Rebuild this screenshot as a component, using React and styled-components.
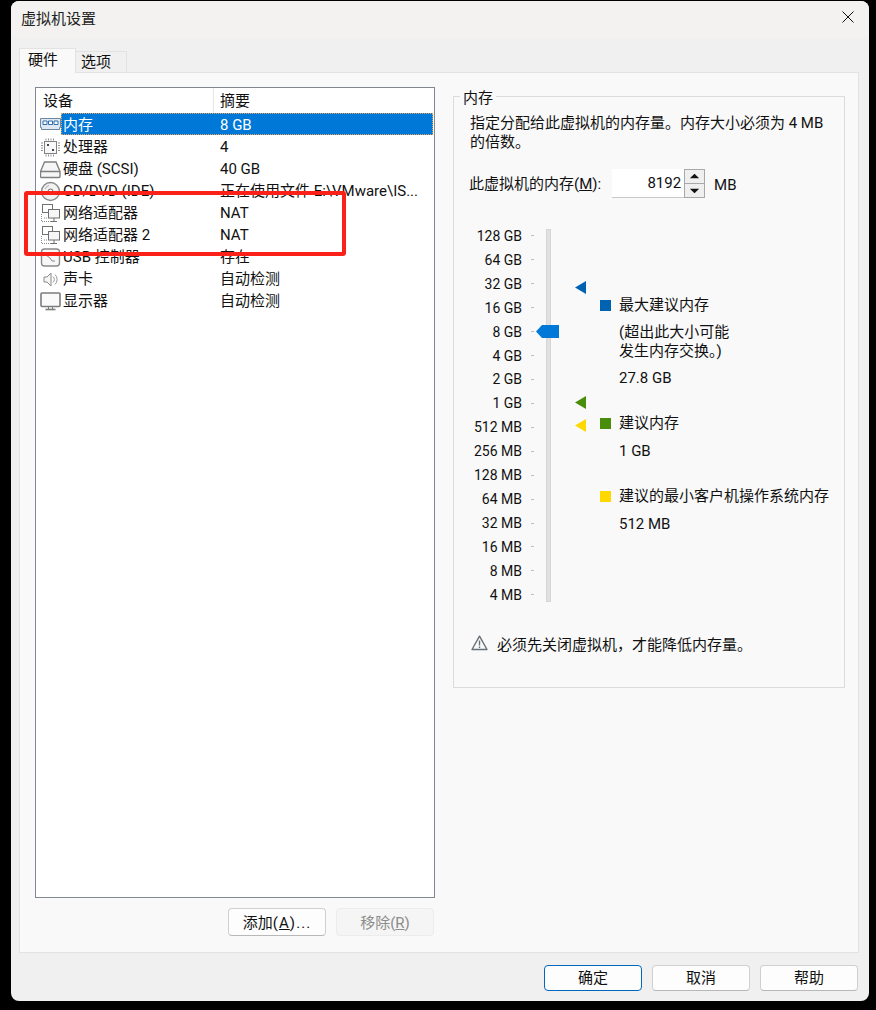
import React from 'react'
import styled, { createGlobalStyle } from 'styled-components'

const GlobalStyle = createGlobalStyle`
  html, body {
    margin: 0;
    padding: 0;
    height: 100%;
    background: #000;
  }
  body {
    font-family: "Roboto", "Noto Sans CJK SC", sans-serif;
    font-size: 15px;
    color: #111;
    overflow: hidden;
  }
`

const devices = [
  { icon: 'memory', name: '内存', summary: '8 GB', selected: true },
  { icon: 'cpu', name: '处理器', summary: '4' },
  { icon: 'disk', name: '硬盘 (SCSI)', summary: '40 GB' },
  { icon: 'cd', name: 'CD/DVD (IDE)', summary: '正在使用文件 E:\\VMware\\IS...' },
  { icon: 'net', name: '网络适配器', summary: 'NAT' },
  { icon: 'net', name: '网络适配器 2', summary: 'NAT' },
  { icon: 'usb', name: 'USB 控制器', summary: '存在' },
  { icon: 'sound', name: '声卡', summary: '自动检测' },
  { icon: 'monitor', name: '显示器', summary: '自动检测' },
]

const scale = ['128 GB', '64 GB', '32 GB', '16 GB', '8 GB', '4 GB', '2 GB', '1 GB', '512 MB', '256 MB', '128 MB', '64 MB', '32 MB', '16 MB', '8 MB', '4 MB']

const icons = {
  memory: (
    <>
      <path d="M0.5 3.5h20v9h-1v2h-18v-2h-1z" fill="#dfe8f2" stroke="#6d88a5" />
      <path d="M3 6h4v3.5H3zM8.5 6h4v3.5h-4zM14 6h4v3.5h-4z" fill="#fff" stroke="#2f6fae" />
    </>
  ),
  cpu: (
    <>
      <rect x="4.5" y="4.5" width="12" height="12" fill="#f8f8f8" stroke="#808080" />
      <path d="M6 1.5v2M8.5 1.5v2M11 1.5v2M13.5 1.5v2M6 17.5v2M8.5 17.5v2M11 17.5v2M13.5 17.5v2M1 6h2M1 8.5h2M1 11h2M1 13.5h2M18 6h2M18 8.5h2M18 11h2M18 13.5h2" stroke="#909090" />
      <path d="M7 7h2v2H7zM12 12h2v2h-2z" fill="#444" />
    </>
  ),
  disk: (
    <>
      <path d="M4.5 3h11.5l4 9.5v5a1 1 0 0 1-1 1H1.5a1 1 0 0 1-1-1v-5z" fill="#f6f6f6" stroke="#808080" strokeWidth="1.4" />
      <path d="M0.5 12.5h19.5" stroke="#808080" strokeWidth="1.4" />
    </>
  ),
  cd: (
    <>
      <circle cx="10.5" cy="10.5" r="9" fill="#f2f2f2" stroke="#8a8a8a" strokeWidth="1.4" />
      <circle cx="10.5" cy="10.5" r="2.5" fill="#fff" stroke="#666" />
      <path d="M5 8a6 6 0 0 1 4-3.5" fill="none" stroke="#aaa" />
    </>
  ),
  net: (
    <>
      <rect x="2.5" y="1.5" width="10" height="8" fill="#fff" stroke="#707070" />
      <path d="M1.5 11v7.5h11M4 15h4" fill="none" stroke="#8a8a8a" strokeDasharray="1 1" />
      <rect x="8.5" y="6.5" width="11" height="8.5" fill="#f6f6f6" stroke="#707070" />
      <path d="M14 15v3M11 18.5h6" stroke="#707070" />
    </>
  ),
  usb: (
    <>
      <rect x="1.5" y="2" width="18" height="17" rx="3" fill="#f7f7f7" stroke="#8a8a8a" strokeWidth="1.4" />
      <path d="M6 8l4 3 2 3h3" fill="none" stroke="#8a8a8a" />
    </>
  ),
  sound: (
    <>
      <path d="M4 8h3l4-4v13l-4-4H4z" fill="#f6f6f6" stroke="#8a8a8a" />
      <path d="M13 7.5a4 4 0 0 1 0 6M15 5.5a7 7 0 0 1 0 10" fill="none" stroke="#9a9a9a" />
    </>
  ),
  monitor: (
    <>
      <rect x="1" y="2" width="19" height="13.5" rx="1" fill="#fafafa" stroke="#7c7c7c" strokeWidth="1.6" />
      <path d="M8.5 15.5v2.5M12.5 15.5v2.5" stroke="#7c7c7c" />
      <path d="M5.5 18.5h10" stroke="#7c7c7c" strokeWidth="1.6" />
    </>
  ),
}

function App() {
  return (
    <Window>
      <GlobalStyle />
      <TitleBar>
        <span>虚拟机设置</span>
        <CloseIcon viewBox="0 0 12 12">
          <path d="M0.5 0.5l11 11M11.5 0.5l-11 11" />
        </CloseIcon>
      </TitleBar>

      <Tabs>
        <Tab $active>硬件</Tab>
        <Tab>选项</Tab>
      </Tabs>

      <Panel>
        <LeftColumn>
          <DeviceList>
            <ListHeader>
              <HeaderCell $width={178}>设备</HeaderCell>
              <HeaderCell>摘要</HeaderCell>
            </ListHeader>
            {devices.map((d, i) => (
              <Row key={i}>
                <RowIcon viewBox="0 0 21 21">{icons[d.icon]}</RowIcon>
                <RowBody $selected={d.selected}>
                  <RowName>{d.name}</RowName>
                  <span>{d.summary}</span>
                </RowBody>
              </Row>
            ))}
          </DeviceList>
          <ListActions>
            <ListButton $width={98} $height={28}>添加<Mnemonic>(<u>A</u>)...</Mnemonic></ListButton>
            <ListButton $width={98} $height={28} disabled>移除(<u>R</u>)</ListButton>
          </ListActions>
        </LeftColumn>

        <Group>
          <GroupTitle>内存</GroupTitle>
          <Description>
            指定分配给此虚拟机的内存量。内存大小必须为 4 MB<br />的倍数。
          </Description>

          <AmountRow>
            <AmountLabel>此虚拟机的内存(<u>M</u>):</AmountLabel>
            <Spinner>
              <SpinInput>8192</SpinInput>
              <SpinButtons>
                <SpinButton viewBox="0 0 20 14" $up><path d="M10 4l5 5H5z" /></SpinButton>
                <SpinButton viewBox="0 0 20 14"><path d="M10 10L5 5h10z" /></SpinButton>
              </SpinButtons>
            </Spinner>
            <AmountUnit>MB</AmountUnit>
          </AmountRow>

          <SliderArea>
            <ScaleLabels>
              {scale.map(s => (
                <ScaleRow key={s}>
                  <span>{s}</span>
                  <Tick />
                </ScaleRow>
              ))}
            </ScaleLabels>
            <Track>
              <Thumb />
            </Track>
            <Markers>
              <Marker $color="#0063b1" $top={57} />
              <Marker $color="#498e0b" $top={102} />
              <Marker $color="#ffd800" $top={10} />
            </Markers>
            <Legend>
              <LegendItem $color="#0063b1">
                <LegendLabel>最大建议内存</LegendLabel>
                <LegendNote>(超出此大小可能<br />发生内存交换。)</LegendNote>
                <LegendValue>27.8 GB</LegendValue>
              </LegendItem>
              <LegendItem $color="#498e0b" $gap={25}>
                <LegendLabel>建议内存</LegendLabel>
                <LegendValue>1 GB</LegendValue>
              </LegendItem>
              <LegendItem $color="#ffd800" $gap={25}>
                <LegendLabel>建议的最小客户机操作系统内存</LegendLabel>
                <LegendValue>512 MB</LegendValue>
              </LegendItem>
            </Legend>
          </SliderArea>

          <Warning>
            <svg width="17" height="16" viewBox="0 0 17 16">
              <path d="M8.5 1.2L16 14.5H1z" fill="none" stroke="#68707a" strokeWidth="1.4" strokeLinejoin="round" />
              <path d="M8.5 5.5v5M8.5 11.5v1.6" stroke="#68707a" strokeWidth="1.4" />
            </svg>
            <span>必须先关闭虚拟机，才能降低内存量。</span>
          </Warning>
        </Group>
      </Panel>

      <Footer>
        <Button $width={98} $height={26} $primary>确定</Button>
        <Button $width={98} $height={26}>取消</Button>
        <Button $width={98} $height={26}>帮助</Button>
      </Footer>

      <Highlight />
    </Window>
  )
}

const Window = styled.div`
  position: relative;
  width: 858px;
  height: 1000px;
  margin: 1px 0 0 11px;
  background: #f0f0f0;
  border-radius: 8px;
  overflow: hidden;
  display: flex;
  flex-direction: column;
`

const TitleBar = styled.div`
  box-sizing: border-box;
  height: 37px;
  flex: none;
  display: flex;
  align-items: center;
  justify-content: space-between;
  padding: 0 15px 5px 10px;
  background: #f3f2f0;
  color: #222;
`

const CloseIcon = styled.svg`
  width: 12px;
  height: 12px;
  fill: none;
  stroke: #111;
  stroke-width: 1;
`

const Tabs = styled.div`
  height: 25px;
  margin: 10px 0 -1px 8px;
  display: flex;
  align-items: flex-end;
  position: relative;
  z-index: 1;
`

const Tab = styled.div`
  box-sizing: border-box;
  width: ${p => (p.$active ? 57 : 51)}px;
  height: ${p => (p.$active ? 25 : 22)}px;
  display: flex;
  align-items: center;
  padding: 0 0 ${p => (p.$active ? 6 : 4)}px ${p => (p.$active ? 8 : 5)}px;
  background: ${p => (p.$active ? '#f9f9f9' : '#f0f0f0')};
  border: 1px solid #e2e2e2;
  border-bottom: ${p => (p.$active ? 'none' : '1px solid #e2e2e2')};
  border-left: ${p => (p.$active ? '1px solid #e2e2e2' : 'none')};
`

const Panel = styled.div`
  box-sizing: border-box;
  width: 840px;
  height: 881px;
  margin-left: 8px;
  padding: 14px 13px 0 15px;
  display: flex;
  gap: 18px;
  background: #f9f9f9;
  border: 1px solid #e2e2e2;
`

const LeftColumn = styled.div`
  width: 400px;
  flex: none;
  display: flex;
  flex-direction: column;
  gap: 10px;
`

const DeviceList = styled.div`
  box-sizing: border-box;
  height: 811px;
  background: #fff;
  border: 1px solid #828790;
`

const ListHeader = styled.div`
  height: 25px;
  display: flex;
  align-items: center;
`

const HeaderCell = styled.div`
  box-sizing: border-box;
  width: ${p => (p.$width ? p.$width + 'px' : 'auto')};
  height: 100%;
  display: flex;
  align-items: center;
  padding: 0 0 3px ${p => (p.$width ? 7 : 6)}px;
  border-right: ${p => (p.$width ? '1px solid #e5e5e5' : 'none')};
`

const Row = styled.div`
  height: 22px;
  display: flex;
  align-items: center;
`

const RowIcon = styled.svg`
  width: 21px;
  height: 21px;
  flex: none;
  margin: 2px 0 0 4px;
`

const RowBody = styled.div`
  box-sizing: border-box;
  flex: 1;
  height: 22px;
  margin-right: 1px;
  padding-left: 2px;
  display: flex;
  align-items: baseline;
  line-height: 24px;
  white-space: nowrap;
  color: ${p => (p.$selected ? '#fff' : '#111')};
  background: ${p => (p.$selected ? '#0078d7' : 'transparent')};
  outline: ${p => (p.$selected ? '1px dotted #e8a35c' : 'none')};
  outline-offset: -1px;
`

const RowName = styled.span`
  width: 157px;
  flex: none;
`

const ListActions = styled.div`
  display: flex;
  justify-content: flex-end;
  gap: 10px;
  padding-right: 1px;
`

const Button = styled.button`
  box-sizing: border-box;
  width: ${p => p.$width}px;
  height: ${p => p.$height}px;
  padding: 0 0 3px;
  font: inherit;
  color: ${p => (p.disabled ? '#8c8c8c' : '#111')};
  background: ${p => (p.disabled ? '#f5f5f5' : '#fdfdfd')};
  border: 1px solid ${p => (p.$primary ? '#0067c0' : p.disabled ? '#ececec' : '#d0d0d0')};
  border-bottom-color: ${p => (p.$primary ? '#0067c0' : p.disabled ? '#ececec' : '#b8b8b8')};
  border-radius: 4px;
`

const ListButton = styled(Button)`
  padding-bottom: 1px;
`

const Mnemonic = styled.span`
  letter-spacing: 1.1px;
`

const Group = styled.fieldset`
  box-sizing: border-box;
  width: 392px;
  height: 601px;
  margin: 0;
  padding: 0 0 0 16px;
  border: 1px solid #dcdcdc;
  min-width: 0;
`

const GroupTitle = styled.legend`
  margin-left: -10px;
  padding: 0 3px;
  height: 18px;
  line-height: 22px;
`

const Description = styled.div`
  margin-top: 9px;
  line-height: 19px;
`

const AmountRow = styled.div`
  margin-top: 17px;
  display: flex;
  align-items: center;
  height: 29px;
`

const AmountLabel = styled.span`
  margin: 0 0 2px -1px;
`

const AmountUnit = styled.span`
  margin-top: 2px;
`

const Spinner = styled.div`
  width: 93px;
  height: 29px;
  margin: 0 9px 0 11px;
  display: flex;
  box-sizing: border-box;
`

const SpinInput = styled.div`
  flex: 1;
  background: #fff;
  border-bottom: 1px solid #c8c8c8;
  text-align: right;
  padding-right: 3px;
  line-height: 29px;
`

const SpinButtons = styled.div`
  width: 21px;
  box-sizing: border-box;
  border: 1px solid #a8a8a8;
  display: flex;
  flex-direction: column;
  background: #f0f0f0;
`

const SpinButton = styled.svg`
  flex: 1;
  width: 100%;
  min-height: 0;
  background: #efefef;
  border-bottom: ${p => (p.$up ? '1px solid #a8a8a8' : 'none')};
  fill: #111;
`

const SliderArea = styled.div`
  margin-top: 26px;
  display: flex;
  align-items: flex-start;
`

const ScaleLabels = styled.div`
  width: 64px;
  flex: none;
  font-size: 14px;
`

const ScaleRow = styled.div`
  height: 23.93px;
  display: flex;
  align-items: center;
  justify-content: flex-end;
  gap: 9px;
  white-space: nowrap;
`

const Tick = styled.i`
  width: 3px;
  height: 1px;
  background: #c0c0c0;
`

const Track = styled.div`
  position: relative;
  width: 5px;
  height: 373px;
  margin: 5px 0 0 12px;
  flex: none;
  background: #e0e0e0;
  border: 1px solid #d6d6d6;
  box-sizing: border-box;
`

const Thumb = styled.div`
  position: absolute;
  left: -11px;
  top: 95px;
  width: 23px;
  height: 13px;
  background: #0078d7;
  clip-path: polygon(0 50%, 6px 0, 100% 0, 100% 100%, 6px 100%);
`

const Markers = styled.div`
  width: 11px;
  margin-left: 24px;
  flex: none;
  display: flex;
  flex-direction: column;
`

const Marker = styled.div`
  width: 11px;
  height: 13px;
  margin-top: ${p => p.$top}px;
  background: ${p => p.$color};
  clip-path: polygon(0 50%, 100% 0, 100% 100%);
`

const Legend = styled.div`
  margin: 71px 0 0 14px;
  display: flex;
  flex-direction: column;
`

const LegendItem = styled.div`
  position: relative;
  padding-left: 19px;
  margin-top: ${p => p.$gap || 0}px;
  &::before {
    content: '';
    position: absolute;
    left: 0;
    top: 5px;
    width: 11px;
    height: 11px;
    background: ${p => p.$color};
  }
`

const LegendLabel = styled.div`
  line-height: 21px;
  white-space: nowrap;
`

const LegendNote = styled.div`
  margin-top: 7px;
  line-height: 19px;
`

const LegendValue = styled.div`
  margin-top: 7px;
  line-height: 20px;
`

const Warning = styled.div`
  margin: 26px 0 0 1px;
  display: flex;
  align-items: center;
  gap: 9px;
`

const Footer = styled.div`
  margin-top: 12px;
  padding-right: 11px;
  display: flex;
  justify-content: flex-end;
  gap: 10px;
`

const Highlight = styled.div`
  position: absolute;
  left: 13px;
  top: 190px;
  width: 322px;
  height: 65px;
  box-sizing: border-box;
  border: 4px solid #fb2118;
  border-radius: 3px;
  pointer-events: none;
`

export default App
